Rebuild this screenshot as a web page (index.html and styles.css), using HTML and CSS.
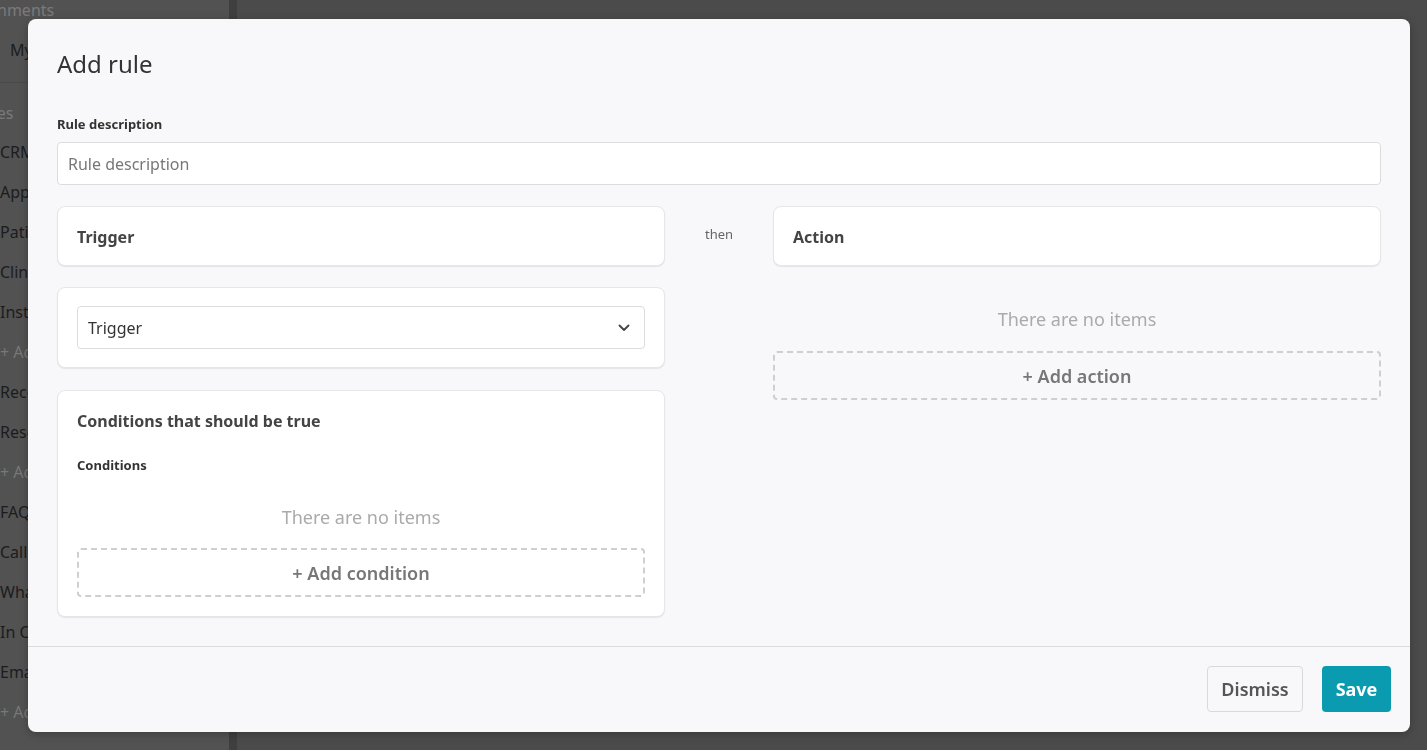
FILE: index.html
```html
<!DOCTYPE html>
<html lang="en">
<head>
  <meta charset="UTF-8">
  <meta name="viewport" content="width=device-width, initial-scale=1.0">
  <title>Add rule</title>
  <link rel="stylesheet" href="styles.css">
</head>
<body>

  <div class="app">
    <aside class="sidebar">
      <div class="side-heading cut-long">Environments</div>
      <div class="side-env">My environment</div>
      <div class="side-heading cut-short">Pipelines</div>
      <ul class="side-list">
        <li>CRM</li>
        <li>Appointments</li>
        <li>Patients</li>
        <li>Clinics</li>
        <li>Instagram</li>
        <li class="side-add">+ Add</li>
        <li>Recent</li>
        <li>Resources</li>
        <li class="side-add">+ Add</li>
        <li>FAQ</li>
        <li>Calls</li>
        <li>WhatsApp</li>
        <li>In Clinic</li>
        <li>Email</li>
        <li class="side-add">+ Add</li>
      </ul>
    </aside>
    <div class="divider"></div>
    <main class="main"></main>
  </div>

  <div class="modal">
    <div class="modal-body">
      <h1 class="modal-title">Add rule</h1>

      <label class="field-label" for="ruleDescription">Rule description</label>
      <input type="text" id="ruleDescription" class="text-input" placeholder="Rule description">

      <div class="columns">
        <div class="column">
          <div class="card card-head">Trigger</div>

          <div class="card card-pad">
            <div class="select">
              <span>Trigger</span>
              <svg width="12" height="8" viewBox="0 0 12 8"><path d="M1.5 1.5 L6 6 L10.5 1.5" fill="none" stroke="#444" stroke-width="1.8" stroke-linecap="round" stroke-linejoin="round"/></svg>
            </div>
          </div>

          <div class="card card-pad conditions">
            <div class="card-title">Conditions that should be true</div>
            <div class="field-label small-gap">Conditions</div>
            <div class="empty">There are no items</div>
            <button class="dashed-btn">+ Add condition</button>
          </div>
        </div>

        <div class="then">then</div>

        <div class="column">
          <div class="card card-head">Action</div>
          <div class="empty action-empty">There are no items</div>
          <button class="dashed-btn">+ Add action</button>
        </div>
      </div>
    </div>

    <div class="modal-footer">
      <button class="btn btn-dismiss">Dismiss</button>
      <button class="btn btn-save">Save</button>
    </div>
  </div>

</body>
</html>
```

FILE: styles.css
```css
body {
  margin: 0;
  font-family: "Noto Sans", "Open Sans", sans-serif;
  background-color: #4b4b4b;
  overflow: hidden;
  height: 750px;
}
.app {
  display: flex;
  height: 750px;
}
.sidebar {
  width: 229px;
  background-color: #525252;
  overflow: hidden;
  white-space: nowrap;
  color: #1c1c1c;
  font-size: 16px;
}
.divider {
  width: 8px;
  background-color: #3f3f3f;
}
.main {
  flex: 1;
  background-color: #4b4b4b;
}
.side-heading {
  color: #7a7a7a;
  font-size: 16px;
  line-height: 20px;
}
.cut-long {
  margin-left: -50px;
}
.cut-short {
  margin-left: -54px;
  margin-top: 12px;
  padding-top: 20px;
  border-top: 1px solid #4a4a4a;
}
.side-env {
  padding: 20px 10px 10px;
  line-height: 20px;
}
.side-list {
  list-style: none;
  margin: 9px 0 0;
  padding: 0;
}
.side-list li {
  line-height: 20px;
  padding: 10px 0;
}
.side-add {
  color: #777;
}

/* modal */
.modal {
  position: fixed;
  left: 28px;
  top: 19px;
  width: 1382px;
  height: 713px;
  background-color: #f8f8fa;
  border-radius: 8px;
  display: flex;
  flex-direction: column;
  box-shadow: 0 2px 8px rgba(0, 0, 0, 0.25);
}
.modal-body {
  flex: 1;
  padding: 29px 29px 0;
}
.modal-title {
  margin: 0 0 35px;
  font-size: 24px;
  line-height: 32px;
  font-weight: 400;
  color: #333;
}
.field-label {
  display: block;
  font-size: 13px;
  line-height: 18px;
  font-weight: 700;
  color: #333;
}
.text-input {
  display: block;
  box-sizing: border-box;
  width: 100%;
  height: 43px;
  margin-top: 9px;
  padding: 0 10px;
  border: 1px solid #dcdcdc;
  border-radius: 4px;
  background-color: #fff;
  font-family: inherit;
  font-size: 16px;
  color: #333;
}
.text-input::placeholder {
  color: #777;
}
.columns {
  display: flex;
  margin-top: 21px;
}
.column {
  flex: 1;
  display: flex;
  flex-direction: column;
}
.then {
  width: 108px;
  text-align: center;
  font-size: 13px;
  color: #666;
  padding-top: 19px;
  line-height: 18px;
}
.card {
  background-color: #fff;
  border: 1px solid #e6e6e6;
  border-radius: 8px;
  box-shadow: 0 1px 1px rgba(0, 0, 0, 0.08);
  box-sizing: border-box;
}
.card-head {
  height: 60px;
  display: flex;
  align-items: center;
  padding: 2px 19px 0;
  font-size: 16px;
  font-weight: 700;
  color: #444;
}
.card-pad {
  margin-top: 21px;
  padding: 18px 19px;
}
.select {
  height: 43px;
  box-sizing: border-box;
  border: 1px solid #dcdcdc;
  border-radius: 4px;
  display: flex;
  align-items: center;
  justify-content: space-between;
  padding: 0 14px 0 10px;
  font-size: 16px;
  color: #333;
}
.conditions {
  margin-top: 22px;
  padding-top: 19px;
  padding-bottom: 19px;
}
.card-title {
  font-size: 16px;
  line-height: 22px;
  font-weight: 700;
  color: #444;
}
.small-gap {
  margin-top: 24px;
}
.empty {
  text-align: center;
  font-size: 18px;
  line-height: 24px;
  color: #aaa;
  margin-top: 31px;
  margin-bottom: 19px;
}
.action-empty {
  margin-top: 41px;
  margin-bottom: 20px;
}
.dashed-btn {
  height: 49px;
  width: 100%;
  background: transparent;
  border: 2px dashed #cfcfcf;
  border-radius: 4px;
  font-family: inherit;
  font-size: 18px;
  font-weight: 600;
  color: #777;
  cursor: pointer;
}
.modal-footer {
  border-top: 1px solid #dcdcdc;
  height: 86px;
  box-sizing: border-box;
  display: flex;
  justify-content: flex-end;
  align-items: flex-start;
  gap: 19px;
  padding: 19px 19px 0;
}
.btn {
  height: 46px;
  border-radius: 4px;
  font-family: inherit;
  font-size: 18px;
  font-weight: 600;
  cursor: pointer;
}
.btn-dismiss {
  width: 96px;
  background-color: #f8f8fa;
  border: 1px solid #d9d9d9;
  color: #555;
}
.btn-save {
  width: 69px;
  background-color: #0a9bb0;
  border: none;
  color: #fff;
  font-weight: 700;
}
```
